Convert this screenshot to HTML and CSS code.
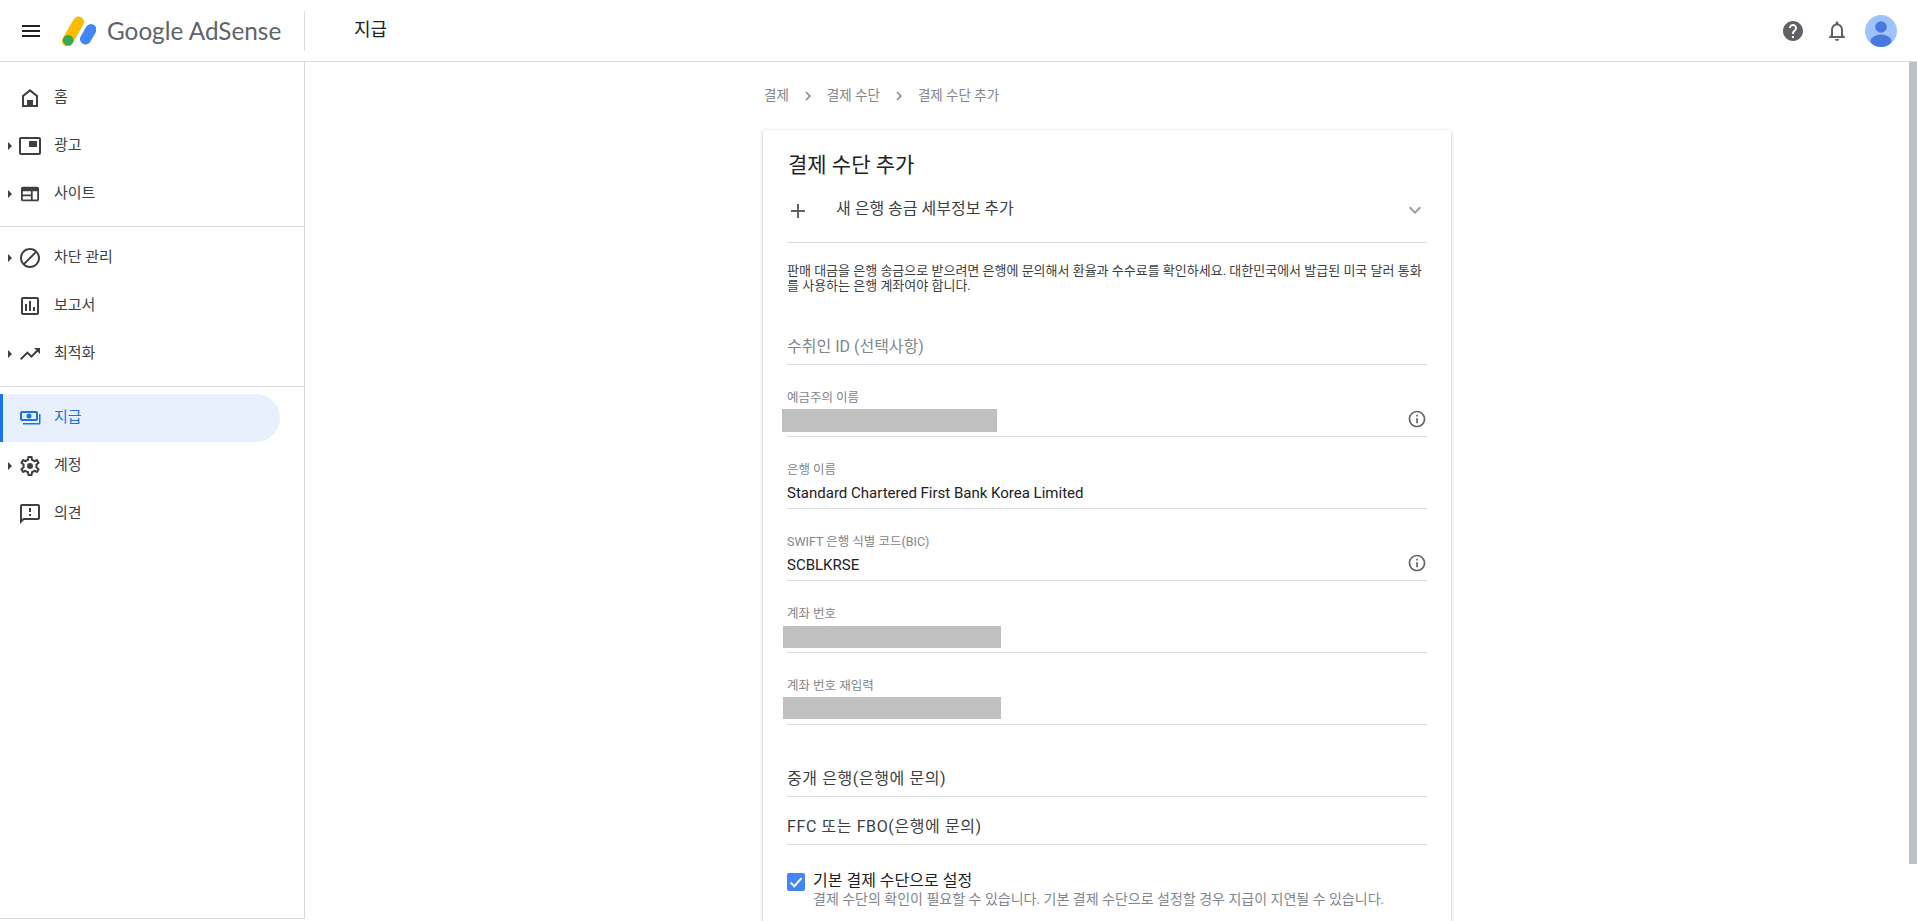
FILE: index.html
```html
<!DOCTYPE html>
<html lang="ko">
<head>
<meta charset="utf-8">
<title>Google AdSense - 지급</title>
<link rel="stylesheet" href="styles.css">
</head>
<body>
<header class="topbar">
  <div class="brand">
    <svg class="menu-icon" viewBox="0 0 24 24"><path d="M3 18h18v-2H3v2zm0-5h18v-2H3v2zm0-7v2h18V6H3z"/></svg>
    <svg class="logo-mark" viewBox="0 0 34 30"><rect x="0" y="0" width="11" height="33" rx="5.5" transform="translate(14.5 -1.5) rotate(30)" fill="#fbbc04"/><rect x="0" y="0" width="11" height="22" rx="5.5" transform="translate(27 6) rotate(30)" fill="#4285f4"/><circle cx="6.2" cy="24.3" r="5.3" fill="#34a853"/></svg>
    <span class="logo-text">Google AdSense</span>
  </div>
  <div class="page-title">지급</div>
  <div class="top-actions">
    <svg class="top-icon" viewBox="0 0 24 24"><path fill="#5f6368" d="M12 2C6.48 2 2 6.48 2 12s4.48 10 10 10 10-4.48 10-10S17.52 2 12 2zm1 17h-2v-2h2v2zm2.07-7.75l-.9.92C13.45 12.9 13 13.5 13 15h-2v-.5c0-1.1.45-2.1 1.17-2.83l1.24-1.26c.37-.36.59-.86.59-1.41 0-1.1-.9-2-2-2s-2 .9-2 2H8c0-2.21 1.79-4 4-4s4 1.79 4 4c0 .88-.36 1.68-.93 2.25z"/></svg>
    <svg class="top-icon" viewBox="0 0 24 24"><path fill="#5f6368" d="M12 22c1.1 0 2-.9 2-2h-4c0 1.1.9 2 2 2zm6-6v-5c0-3.07-1.63-5.64-4.5-6.32V4c0-.83-.67-1.5-1.5-1.5s-1.5.67-1.5 1.5v.68C7.64 5.36 6 7.92 6 11v5l-2 2v1h16v-1l-2-2zm-2 1H8v-6c0-2.48 1.51-4.5 4-4.5s4 2.02 4 4.5v6z"/></svg>
    <svg class="avatar" viewBox="0 0 32 32"><defs><clipPath id="av"><circle cx="16" cy="16" r="16"/></clipPath></defs><circle cx="16" cy="16" r="16" fill="#a0c3ff"/><g clip-path="url(#av)"><circle cx="16" cy="12" r="5.8" fill="#4979e0"/><ellipse cx="16" cy="26" rx="10.5" ry="6.5" fill="#4979e0"/></g></svg>
  </div>
</header>

<div class="layout">
  <nav class="sidebar">
    <div class="nav-group">
      <a class="nav-item"><span class="caret-slot"></span><svg class="nav-icon" viewBox="0 0 24 24"><path fill-rule="evenodd" d="M12 3L4 9.500V21h16V9.500L12 3zm6 16H6v-8.500l6-4.800 6 4.800V19zM9 14h6v5H9z"/></svg><span class="nav-label">홈</span></a>
      <a class="nav-item"><span class="caret-slot caret"></span><svg class="nav-icon" viewBox="0 0 24 24"><path d="M19 7h-8v6h8V7zm2-4H3C1.900 3 1 3.900 1 5v14c0 1.100.9 2 2 2h18c1.100 0 2-.9 2-2V5c0-1.100-.9-2-2-2zm0 16H3V5h18v14z"/></svg><span class="nav-label">광고</span></a>
      <a class="nav-item"><span class="caret-slot caret"></span><svg class="nav-icon" viewBox="0 0 24 24"><path transform="translate(12 12) scale(.9) translate(-12 -12)" d="M20 4H4c-1.100 0-2 .9-2 2v12c0 1.100.9 2 2 2h16c1.100 0 2-.9 2-2V6c0-1.100-.9-2-2-2zm-7 14H4v-3.500h9V18zm0-5.500H4V9h9v3.500zM20 18h-5V9h5v9z"/></svg><span class="nav-label">사이트</span></a>
    </div>
    <div class="nav-group">
      <a class="nav-item"><span class="caret-slot caret"></span><svg class="nav-icon" viewBox="0 0 24 24"><path d="M12 2C6.48 2 2 6.48 2 12s4.48 10 10 10 10-4.48 10-10S17.52 2 12 2zM4 12c0-4.420 3.580-8 8-8 1.850 0 3.550.63 4.900 1.690L5.690 16.900A7.902 7.902 0 0 1 4 12zm8 8c-1.850 0-3.550-.63-4.900-1.690L18.310 7.100A7.902 7.902 0 0 1 20 12c0 4.420-3.580 8-8 8z"/></svg><span class="nav-label">차단 관리</span></a>
      <a class="nav-item"><span class="caret-slot"></span><svg class="nav-icon" viewBox="0 0 24 24"><path d="M19 3H5c-1.100 0-2 .9-2 2v14c0 1.100.9 2 2 2h14c1.100 0 2-.9 2-2V5c0-1.100-.9-2-2-2zm0 16H5V5h14v14zM7 10h2v7H7zm4-3h2v10h-2zm4 6h2v4h-2z"/></svg><span class="nav-label">보고서</span></a>
      <a class="nav-item"><span class="caret-slot caret"></span><svg class="nav-icon" viewBox="0 0 24 24"><path d="M16 6l2.290 2.290-4.880 4.880-4-4L2 16.590 3.410 18l6-6 4 4 6.300-6.290L22 12V6z"/></svg><span class="nav-label">최적화</span></a>
    </div>
    <div class="nav-group nav-group-last">
      <a class="nav-item nav-active"><span class="caret-slot"></span><svg class="nav-icon" viewBox="0 0 24 24"><path fill-rule="evenodd" d="M4 5h14c1.100 0 2 .9 2 2v6c0 1.100-.9 2-2 2H4c-1.100 0-2-.9-2-2V7c0-1.100.9-2 2-2zm1 2c-.6 0-1 .4-1 1v4c0 .6.4 1 1 1h12c.6 0 1-.4 1-1V8c0-.6-.4-1-1-1H5zm6 .500a2.500 2.500 0 1 1 0 5 2.500 2.500 0 0 1 0-5zM21 8h1.500v9c0 .8-.7 1.500-1.500 1.500H5V17h16V8z"/></svg><span class="nav-label">지급</span></a>
      <a class="nav-item"><span class="caret-slot caret"></span><svg class="nav-icon" viewBox="0 0 24 24"><path d="M19.430 12.980c.04-.32.07-.64.07-.98s-.03-.66-.07-.98l2.110-1.650c.19-.15.24-.42.12-.64l-2-3.460c-.12-.22-.39-.3-.61-.22l-2.490 1c-.52-.4-1.080-.73-1.690-.98l-.38-2.650C14.460 2.180 14.250 2 14 2h-4c-.25 0-.46.18-.49.42l-.38 2.650c-.61.25-1.170.59-1.690.98l-2.490-1c-.23-.09-.49 0-.61.22l-2 3.460c-.13.22-.07.49.12.64l2.110 1.650c-.04.32-.07.65-.07.98s.03.66.07.98l-2.110 1.650c-.19.15-.24.42-.12.64l2 3.460c.12.22.39.3.61.22l2.490-1c.52.4 1.080.73 1.690.98l.38 2.650c.03.24.24.42.49.42h4c.25 0 .46-.18.49-.42l.38-2.650c.61-.25 1.170-.59 1.690-.98l2.490 1c.23.09.49 0 .61-.22l2-3.460c.12-.22.07-.49-.12-.64l-2.110-1.650zM17.450 11.270c.04.31.05.52.05.73 0 .21-.02.43-.05.73l-.14 1.130.89.7 1.080.84-.7 1.210-1.270-.51-1.040-.42-.9.68c-.43.32-.84.56-1.250.73l-1.060.43-.16 1.130-.2 1.350h-1.400l-.19-1.350-.16-1.130-1.060-.43c-.43-.18-.83-.41-1.230-.71l-.91-.7-1.060.43-1.270.51-.7-1.210 1.080-.84.89-.7-.14-1.130C6.520 12.430 6.500 12.200 6.500 12s.02-.43.05-.72l.14-1.130-.89-.7-1.080-.84.7-1.210 1.270.51 1.040.42.9-.68c.43-.32.84-.56 1.250-.73l1.060-.43.16-1.130.2-1.350h1.390l.19 1.350.16 1.130 1.060.43c.43.18.83.41 1.230.71l.91.7 1.060-.43 1.270-.51.7 1.210-1.070.85-.89.7.14 1.130zM12 9a3 3 0 1 0 0 6 3 3 0 0 0 0-6z"/></svg><span class="nav-label">계정</span></a>
      <a class="nav-item"><span class="caret-slot"></span><svg class="nav-icon" viewBox="0 0 24 24"><path d="M20 2H4c-1.100 0-2 .9-2 2v18l4-4h14c1.100 0 2-.9 2-2V4c0-1.100-.9-2-2-2zm0 14H5.170L4 17.170V4h16v12zM11 12h2v2h-2zm0-6h2v4h-2z"/></svg><span class="nav-label">의견</span></a>
    </div>
  </nav>

  <main class="content">
    <div class="breadcrumbs">
      <span>결제</span><svg class="crumb-sep" viewBox="0 0 24 24"><path d="M10 6L8.590 7.410 13.170 12l-4.580 4.590L10 18l6-6z"/></svg>
      <span>결제 수단</span><svg class="crumb-sep" viewBox="0 0 24 24"><path d="M10 6L8.590 7.410 13.170 12l-4.580 4.590L10 18l6-6z"/></svg>
      <span>결제 수단 추가</span>
    </div>
    <section class="card">
      <h1 class="card-title">결제 수단 추가</h1>
      <div class="add-row">
        <svg class="plus-icon" viewBox="0 0 24 24"><path d="M19 13h-6v6h-2v-6H5v-2h6V5h2v6h6v2z"/></svg>
        <span class="add-label">새 은행 송금 세부정보 추가</span>
        <svg class="chev-icon" viewBox="0 0 24 24"><path d="M7.410 8.590L12 13.170l4.590-4.580L18 10l-6 6-6-6z"/></svg>
      </div>
      <p class="notice">판매 대금을 은행 송금으로 받으려면 은행에 문의해서 환율과 수수료를 확인하세요. 대한민국에서 발급된 미국 달러 통화를 사용하는 은행 계좌여야 합니다.</p>
      <div class="field field-empty"><span class="placeholder">수취인 ID (선택사항)</span></div>
      <div class="field"><span class="field-label">예금주의 이름</span><span class="field-value"></span><span class="redact redact-name"></span><svg class="info-icon" viewBox="0 0 24 24"><path d="M11 7h2v2h-2zm0 4h2v6h-2zm1-9C6.480 2 2 6.480 2 12s4.480 10 10 10 10-4.480 10-10S17.520 2 12 2zm0 18c-4.410 0-8-3.590-8-8s3.590-8 8-8 8 3.590 8 8-3.590 8-8 8z"/></svg></div>
      <div class="field"><span class="field-label">은행 이름</span><span class="field-value">Standard Chartered First Bank Korea Limited</span></div>
      <div class="field"><span class="field-label">SWIFT 은행 식별 코드(BIC)</span><span class="field-value">SCBLKRSE</span><svg class="info-icon" viewBox="0 0 24 24"><path d="M11 7h2v2h-2zm0 4h2v6h-2zm1-9C6.480 2 2 6.480 2 12s4.480 10 10 10 10-4.480 10-10S17.520 2 12 2zm0 18c-4.410 0-8-3.590-8-8s3.590-8 8-8 8 3.590 8 8-3.590 8-8 8z"/></svg></div>
      <div class="field"><span class="field-label">계좌 번호</span><span class="field-value"></span><span class="redact redact-acct"></span></div>
      <div class="field"><span class="field-label">계좌 번호 재입력</span><span class="field-value"></span><span class="redact redact-acct redact-again"></span></div>
      <div class="field"><span class="link-label">중개 은행(은행에 문의)</span></div>
      <div class="field field-short"><span class="link-label">FFC 또는 FBO(은행에 문의)</span></div>
      <div class="check-row">
        <span class="checkbox"><svg viewBox="0 0 18 18"><path d="M3.500 9.500l3.800 3.700 7.200-8" fill="none" stroke="#fff" stroke-width="2"/></svg></span>
        <div class="check-text">
          <div class="check-label">기본 결제 수단으로 설정</div>
          <div class="check-help">결제 수단의 확인이 필요할 수 있습니다. 기본 결제 수단으로 설정할 경우 지급이 지연될 수 있습니다.</div>
        </div>
      </div>
    </section>
  </main>

  <div class="scrollbar"><div class="scroll-thumb"></div></div>
</div>
</body>
</html>
```

FILE: styles.css
```css
* { box-sizing: border-box; }
html, body { margin: 0; height: 100%; overflow: hidden; }
body {
  display: flex;
  flex-direction: column;
  background: #fff;
  color: #202124;
  font-family: Roboto, "Noto Sans CJK KR", sans-serif;
}

/* top bar */
.topbar {
  flex: none;
  height: 62px;
  display: flex;
  align-items: center;
  border-bottom: 1px solid #dadce0;
}
.brand {
  flex: none;
  width: 305px;
  height: 40px;
  display: flex;
  align-items: center;
  border-right: 1px solid #dadce0;
  padding-left: 19px;
}
.menu-icon { width: 24px; height: 24px; fill: #202124; flex: none; }
.logo-mark { width: 34px; height: 30px; margin-left: 19px; flex: none; }
.logo-text {
  margin-left: 11px;
  font-family: Lato, Roboto, sans-serif;
  font-size: 24.3px;
  color: #5f6368;
  white-space: nowrap;
}
.page-title { margin-left: 49px; margin-top: -6px; font-size: 18px; color: #202124; }
.top-actions {
  margin-left: auto;
  display: flex;
  align-items: center;
  gap: 20px;
  padding-right: 20px;
}
.top-icon { width: 24px; height: 24px; }
.avatar { width: 32px; height: 32px; margin-left: -4px; }

/* frame */
.layout { flex: 1; min-height: 0; display: flex; }

.sidebar {
  flex: none;
  width: 305px;
  height: 857px;
  border-right: 1px solid #d6d7db;
  border-bottom: 1px solid #dadce0;
  padding-top: 12px;
}
.nav-group { padding-bottom: 8px; margin-bottom: 7px; border-bottom: 1px solid #dadce0; }
.nav-group-last { border-bottom: 0; }
.nav-item {
  height: 48px;
  display: flex;
  align-items: center;
  color: #3c4043;
  font-size: 15px;
}
.caret-slot { width: 18px; flex: none; display: flex; padding-left: 8px; }
.caret::before {
  content: "";
  border-left: 4px solid #3c4043;
  border-top: 4px solid transparent;
  border-bottom: 4px solid transparent;
}
.nav-icon { width: 24px; height: 24px; fill: #3c4043; flex: none; }
.nav-label { margin-left: 12px; margin-top: -6px; }
.nav-active {
  width: 280px;
  background: #e8f0fe;
  border-left: 3px solid #1a73e8;
  border-radius: 0 24px 24px 0;
  color: #1a73e8;
}
.nav-active .caret-slot { width: 15px; }
.nav-active .nav-icon { fill: #1a73e8; }

/* main */
.content {
  flex: 1;
  min-width: 0;
  display: flex;
  flex-direction: column;
  align-items: center;
  overflow: hidden;
}
.breadcrumbs {
  flex: none;
  width: 688px;
  height: 68px;
  padding: 25px 0 0 1px;
  display: flex;
  align-items: flex-start;
  font-size: 13.5px;
  line-height: 16px;
  color: #80868b;
}
.crumb-sep { width: 18px; height: 18px; fill: #80868b; margin: 0 10px; flex: none; }
.card {
  flex: none;
  width: 688px;
  padding: 20px 24px 0 24px;
  background: #fff;
  box-shadow: 0 1px 3px rgba(60,64,67,.3), 0 1px 4px rgba(60,64,67,.12);
  border-radius: 2px;
}
.card-title { margin: 0 0 0 1px; font-size: 21px; font-weight: 400; line-height: 30px; color: #202124; }
.add-row {
  height: 63px;
  display: flex;
  align-items: flex-start;
  border-bottom: 1px solid #dadce0;
}
.plus-icon { width: 24px; height: 24px; fill: #5f6368; margin: 19px 0 0 -1px; flex: none; }
.add-label { margin: 19px 0 0 26px; font-size: 16px; line-height: 20px; color: #3c4043; }
.chev-icon { width: 24px; height: 24px; fill: #9aa0a6; margin: 18px 0 0 auto; flex: none; }
.notice { margin: 20px 0 0; font-size: 13px; line-height: 15px; color: #3c4043; }
.field {
  position: relative;
  height: 72px;
  border-bottom: 1px solid #dadce0;
  display: flex;
  flex-direction: column;
  justify-content: flex-end;
}
.field-empty { height: 72px; }
.placeholder { font-size: 16px; line-height: 20px; color: #80868b; padding-bottom: 7px; }
.field-label { font-size: 12.5px; line-height: 14px; color: #80868b; }
.field-value { font-size: 15px; line-height: 20px; height: 20px; color: #202124; margin-top: 6px; margin-bottom: 5px; }
.redact { position: absolute; background: #c0c0c0; }
.redact-name { left: -5px; bottom: 4px; width: 215px; height: 23px; }
.redact-acct { left: -4px; bottom: 4px; width: 218px; height: 22px; }
.redact-again { bottom: 5px; }
.info-icon { position: absolute; right: 0; bottom: 7px; width: 20px; height: 20px; fill: #5f6368; }
.field-short { height: 48px; }
.link-label { font-size: 16px; letter-spacing: .6px; line-height: 20px; color: #3c4043; padding-bottom: 7px; }
.check-row { display: flex; margin-top: 28px; gap: 8px; padding-bottom: 40px; }
.checkbox {
  width: 18px; height: 18px; flex: none; background: #4285f4; border-radius: 2px; display: block;
}
.checkbox svg { display: block; width: 18px; height: 18px; }
.check-text { margin-top: -2px; }
.check-label { font-size: 16px; line-height: 19px; color: #202124; }
.check-help { font-size: 14px; line-height: 19px; color: #80868b; }

/* scrollbar */
.scrollbar { flex: none; width: 8px; background: #fff; }
.scroll-thumb { height: 802px; background: #bdc1c6; }
```
